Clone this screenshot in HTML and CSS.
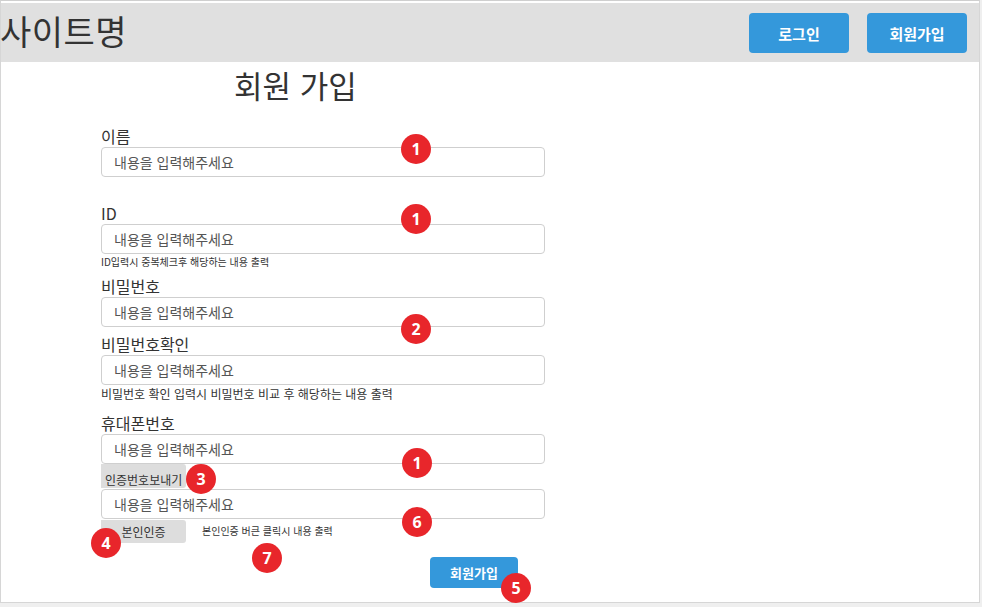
FILE: index.html
```html
<!DOCTYPE html>
<html lang="ko">
<head>
<meta charset="utf-8">
<title>회원 가입</title>
<link rel="stylesheet" href="styles.css">
</head>
<body>
<div class="page">
  <header class="topbar">
    <div class="logo">사이트명</div>
    <nav class="nav">
      <button class="btn-blue nav-btn">로그인</button>
      <button class="btn-blue nav-btn">회원가입</button>
    </nav>
  </header>
  <main class="content">
    <h1 class="title">회원 가입</h1>
    <form class="form">
      <div class="field f-name">
        <label class="label">이름</label>
        <input class="input" placeholder="내용을 입력해주세요">
      </div>
      <div class="field f-id">
        <label class="label">ID</label>
        <input class="input" placeholder="내용을 입력해주세요">
        <p class="help">ID입력시 중복체크후 해당하는 내용 출력</p>
      </div>
      <div class="field f-pw">
        <label class="label">비밀번호</label>
        <input class="input" placeholder="내용을 입력해주세요">
      </div>
      <div class="field f-pw2">
        <label class="label">비밀번호확인</label>
        <input class="input" placeholder="내용을 입력해주세요">
        <p class="help help-pw">비밀번호 확인 입력시 비밀번호 비교 후 해당하는 내용 출력</p>
      </div>
      <div class="field f-phone">
        <label class="label">휴대폰번호</label>
        <input class="input" placeholder="내용을 입력해주세요">
        <button type="button" class="btn-gray btn-send">인증번호보내기</button>
        <input class="input input-code" placeholder="내용을 입력해주세요">
        <div class="verify-row">
          <button type="button" class="btn-gray btn-verify">본인인증</button>
          <span class="help help-verify">본인인증 버큰 클릭시 내용 출력</span>
        </div>
      </div>
      <div class="submit-row">
        <button type="button" class="btn-blue submit">회원가입</button>
      </div>
    </form>
  </main>
  <span class="badge" style="left:400px;top:133px">1</span>
  <span class="badge" style="left:400px;top:203px">1</span>
  <span class="badge" style="left:400px;top:313px">2</span>
  <span class="badge" style="left:401px;top:447px">1</span>
  <span class="badge" style="left:185px;top:463px">3</span>
  <span class="badge" style="left:401px;top:506px">6</span>
  <span class="badge" style="left:90px;top:527px">4</span>
  <span class="badge" style="left:251px;top:542px">7</span>
  <span class="badge" style="left:500px;top:572px">5</span>
</div>
</body>
</html>
```
FILE: styles.css
```css
* { box-sizing: border-box; }
html, body { margin: 0; padding: 0; }
body {
  background: #efefef;
  font-family: "Noto Sans CJK KR", "Noto Sans", sans-serif;
  color: #333;
  width: 982px;
  height: 607px;
  overflow: hidden;
}
.page {
  position: relative;
  width: 980px;
  height: 603px;
  background: #fff;
  border: 1px solid #d6d6d6;
  border-top-color: #cfcfcf;
  padding-top: 2px;
}
.topbar {
  height: 59px;
  background: #e0e0e0;
  display: flex;
  align-items: flex-start;
  justify-content: space-between;
}
.logo {
  font-size: 34px;
  line-height: 40px;
  margin-top: 8px;
  margin-left: -1px;
  color: #333;
  letter-spacing: 0.5px;
}
.nav {
  display: flex;
  gap: 18px;
  margin-top: 10px;
  margin-right: 12px;
}
button { font-family: inherit; cursor: pointer; }
.btn-blue {
  background: #3498db;
  color: #fff;
  border: none;
  border-radius: 4px;
  font-weight: 700;
  font-size: 14px;
}
.nav-btn {
  width: 100px;
  height: 40px;
  font-size: 15px;
}
.content {
  padding-left: 100px;
}
.title {
  margin: 0;
  padding-left: 133px;
  padding-top: 3px;
  font-size: 31px;
  font-weight: 400;
  line-height: 40px;
  color: #333;
}
.form {
  width: 445px;
  display: flex;
  flex-direction: column;
}
.field { display: flex; flex-direction: column; }
.label {
  font-size: 16px;
  line-height: 20px;
  margin-bottom: 1px;
  color: #333;
}
.f-name { margin-top: 21px; }
.f-id { margin-top: 26px; }
.f-pw { margin-top: 7px; }
.f-pw2 { margin-top: 7px; }
.f-phone { margin-top: 12px; }
.input {
  width: 444px;
  height: 30px;
  border: 1px solid #cfcfcf;
  border-radius: 4px;
  padding: 0 12px;
  font-family: inherit;
  font-size: 14px;
  color: #333;
}
.input::placeholder { color: #555; }
.input-code { margin-top: 1px; }
.help {
  margin: 0;
  font-size: 10px;
  line-height: 14px;
  color: #333;
}
.f-id .help { margin-top: 1px; }
.help-pw { font-size: 12px; margin-top: 2px; }
.btn-gray {
  background: #dddddd;
  border: none;
  border-radius: 0 3px 3px 0;
  color: #333;
  font-size: 12px;
  padding: 0;
}
.btn-send {
  width: 85px;
  height: 24px;
  text-align: left;
  padding-left: 4px;
  padding-top: 6px;
}
.verify-row {
  display: flex;
  align-items: center;
  gap: 16px;
  margin-top: 1px;
}
.btn-verify {
  width: 85px;
  height: 23px;
  font-size: 12px;
}
.help-verify { font-size: 10px; margin-top: -2px; }
.submit-row {
  display: flex;
  padding-left: 329px;
  margin-top: 14px;
}
.submit {
  width: 88px;
  height: 31px;
  font-size: 13px;
}
.badge {
  position: absolute;
  width: 30px;
  height: 30px;
  border-radius: 50%;
  background: #e8262b;
  color: #fff;
  font-family: "Noto Sans", sans-serif;
  font-weight: 700;
  font-size: 16px;
  line-height: 30px;
  text-align: center;
}
```
